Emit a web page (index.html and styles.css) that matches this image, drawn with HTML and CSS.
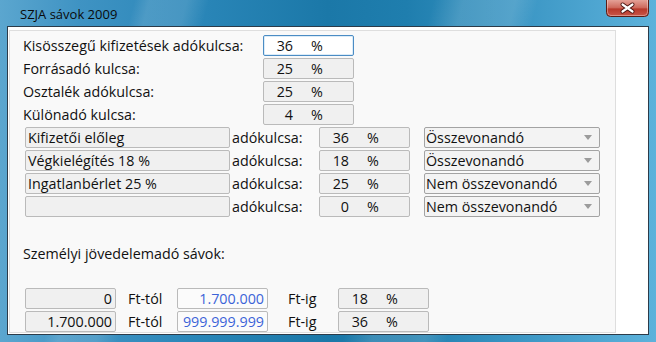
FILE: index.html
```html
<!DOCTYPE html>
<html lang="hu">
<head>
<meta charset="utf-8">
<title>SZJA sávok 2009</title>
<link rel="stylesheet" href="styles.css">
</head>
<body>
<div class="window">
  <div class="titlebar">
    <span class="title">SZJA sávok 2009</span>
    <div class="close">
      <svg width="43" height="17" viewBox="0 0 43 17">
        <defs>
          <linearGradient id="cg" x1="0" y1="0" x2="0" y2="1">
            <stop offset="0" stop-color="#e4a197"/>
            <stop offset="0.45" stop-color="#cf6b5e"/>
            <stop offset="0.55" stop-color="#b8392b"/>
            <stop offset="1" stop-color="#c9574a"/>
          </linearGradient>
        </defs>
        <path d="M0.5 0 V12.5 Q0.5 16.5 4.5 16.5 H38.5 Q42.5 16.5 42.5 12.5 V0" fill="url(#cg)" stroke="#5a1d16"/>
        <path d="M1.5 0 V12 Q1.5 15.5 5 15.5 H38 Q41.5 15.5 41.5 12 V0" fill="none" stroke="rgba(255,255,255,0.35)"/>
        <path d="M16.5 4.5 L26.5 11.5 M26.5 4.5 L16.5 11.5" stroke="#4a1410" stroke-width="4" stroke-linecap="round"/>
        <path d="M16.5 4.5 L26.5 11.5 M26.5 4.5 L16.5 11.5" stroke="#ffffff" stroke-width="2.2" stroke-linecap="round"/>
      </svg>
    </div>
  </div>
  <div class="client">
    <div class="panel">
      <div class="rates">
        <span class="label">Kisösszegű kifizetések adókulcsa:</span>
        <div class="box pctbox focus"><span class="num">36</span><span class="pct">%</span></div>
        <span class="label">Forrásadó kulcsa:</span>
        <div class="box pctbox"><span class="num">25</span><span class="pct">%</span></div>
        <span class="label">Osztalék adókulcsa:</span>
        <div class="box pctbox"><span class="num">25</span><span class="pct">%</span></div>
        <span class="label">Különadó kulcsa:</span>
        <div class="box pctbox"><span class="num">4</span><span class="pct">%</span></div>
      </div>
      <div class="cats">
        <div class="box name">Kifizetői előleg</div>
        <span class="label lbl2">adókulcsa:</span>
        <div class="box pctbox"><span class="num">36</span><span class="pct">%</span></div>
        <div class="select"><span>Összevonandó</span><span class="arrow"></span></div>

        <div class="box name">Végkielégítés 18 %</div>
        <span class="label lbl2">adókulcsa:</span>
        <div class="box pctbox"><span class="num">18</span><span class="pct">%</span></div>
        <div class="select"><span>Összevonandó</span><span class="arrow"></span></div>

        <div class="box name">Ingatlanbérlet 25 %</div>
        <span class="label lbl2">adókulcsa:</span>
        <div class="box pctbox"><span class="num">25</span><span class="pct">%</span></div>
        <div class="select"><span>Nem összevonandó</span><span class="arrow"></span></div>

        <div class="box name"></div>
        <span class="label lbl2">adókulcsa:</span>
        <div class="box pctbox"><span class="num">0</span><span class="pct">%</span></div>
        <div class="select"><span>Nem összevonandó</span><span class="arrow"></span></div>
      </div>
      <div class="heading">Személyi jövedelemadó sávok:</div>
      <div class="bands">
        <div class="box amount">0</div>
        <span class="label from">Ft-tól</span>
        <div class="box amount edit">1.700.000</div>
        <span class="label to">Ft-ig</span>
        <div class="box pctbox"><span class="num">18</span><span class="pct">%</span></div>

        <div class="box amount">1.700.000</div>
        <span class="label from">Ft-tól</span>
        <div class="box amount edit">999.999.999</div>
        <span class="label to">Ft-ig</span>
        <div class="box pctbox"><span class="num">36</span><span class="pct">%</span></div>
      </div>
    </div>
  </div>
</div>
</body>
</html>
```

FILE: styles.css
```css
* { box-sizing: border-box; }

html, body {
  margin: 0;
  padding: 0;
  background: #1f86b8;
}

.window {
  width: 656px;
  height: 342px;
  display: flex;
  flex-direction: column;
  font-family: "Open Sans", "Noto Sans", sans-serif;
  background:
    linear-gradient(105deg, transparent 0 18%, rgba(255,255,255,0.13) 20% 25%, transparent 28% 58%, rgba(255,255,255,0.14) 62% 69%, transparent 72%),
    linear-gradient(90deg, #5ba6cf 0%, #3f93c3 12%, #2a86b8 30%, #1b78a8 50%, #1f7eae 62%, #3c97c5 80%, #5db2db 100%);
}

.titlebar {
  height: 26px;
  flex: none;
  display: flex;
  align-items: flex-start;
  padding-left: 20px;
}

.title {
  font-size: 13px;
  line-height: 18px;
  padding-top: 5px;
  color: #0a0a0a;
}

.close {
  margin-left: auto;
  margin-right: 7px;
  width: 43px;
  height: 17px;
}

.close svg { display: block; }

.client {
  height: 309px;
  margin: 0 7px;
  border: 1px solid #2c3b49;
  background: #ffffff;
  display: flex;
  padding: 3px 32px 1px 1px;
}

.panel {
  flex: 1;
  border: 1px solid #dedede;
  background: #f9f9f9;
  padding: 4px 0 0 13px;
  font-size: 14.3px;
  color: #111;
}

.label {
  line-height: 21px;
  white-space: nowrap;
}

.box {
  height: 21px;
  border: 1px solid #bababa;
  border-radius: 2px;
  background: #f0f0f0;
  line-height: 19px;
  white-space: nowrap;
  overflow: hidden;
}

.box.focus {
  border-color: #4b8cc4;
  background: #ffffff;
  box-shadow: inset 0 0 0 1px #dcecf8;
}

.pctbox { width: 91px; }

.pctbox .num {
  display: inline-block;
  width: 29px;
  text-align: right;
}

.pctbox .pct {
  margin-left: 18px;
}

.rates {
  display: grid;
  grid-template-columns: 240px 91px;
  grid-auto-rows: 21px;
  row-gap: 2px;
  align-items: center;
}

.cats {
  margin-top: 2px;
  margin-left: 2px;
  display: grid;
  grid-template-columns: 205px 89px 105px 176px;
  grid-auto-rows: 21px;
  row-gap: 2px;
  align-items: center;
}

.name {
  width: 205px;
  padding-left: 2px;
}

.lbl2 { padding-left: 2px; }

.select {
  height: 21px;
  border: 1px solid #a3a3a3;
  border-radius: 2px;
  background: #f3f3f3;
  display: flex;
  align-items: center;
  justify-content: space-between;
  padding-left: 1px;
  padding-right: 7px;
  line-height: 19px;
  white-space: nowrap;
}

.arrow {
  width: 0;
  height: 0;
  border-left: 4.5px solid transparent;
  border-right: 4.5px solid transparent;
  border-top: 5px solid #9b9b9b;
}

.heading {
  margin-top: 26px;
  line-height: 21px;
}

.bands {
  margin-top: 24px;
  margin-left: 2px;
  display: grid;
  grid-template-columns: 91px 61px 91px 70px 91px;
  grid-auto-rows: 21px;
  row-gap: 2px;
  align-items: center;
}

.amount {
  text-align: right;
  padding-right: 3px;
}

.amount.edit {
  background: #fbfbfb;
  color: #3c64d8;
}

.from { padding-left: 12px; }
.to { padding-left: 20px; }
```
